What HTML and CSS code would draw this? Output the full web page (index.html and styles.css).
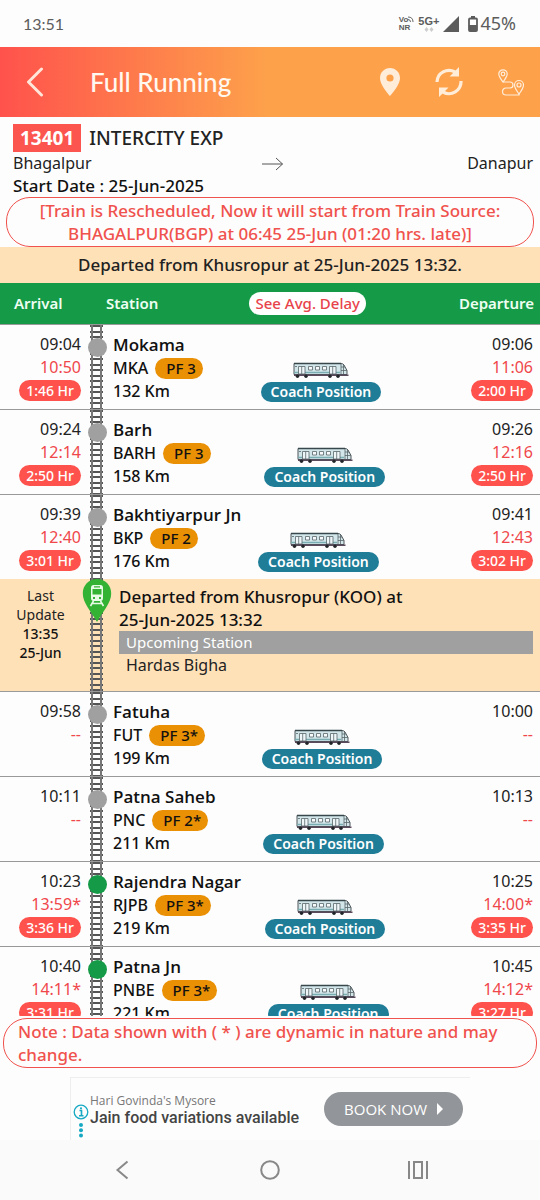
FILE: index.html
```html
<!DOCTYPE html>
<html lang="en">
<head>
  <meta charset="UTF-8" />
  <meta name="viewport" content="width=device-width, initial-scale=1.0"/>
  <title>Full Running - 13401 INTERCITY EXP</title>
  <link rel="stylesheet" href="styles.css">
</head>
<body>
  <svg class="sprite" aria-hidden="true">
    <symbol id="train" viewBox="0 0 56 16">
      <path d="M1 1.5H48Q50 1.5 51 3L54 8.5V12.5H1Z" fill="#d3e6ea" stroke="#4c5558"/>
      <path d="M1 1.5H48" stroke="#37474c" stroke-width="1.4"/>
      <path d="M1 10.5H47" stroke="#79aeb2" stroke-width="1.6"/>
      <path d="M5.5 4.5H12V12H5.5ZM8.7 4.5V12M36.5 4.5H43V12H36.5ZM39.7 4.5V12" fill="#eef6f8" stroke="#59666a" stroke-width=".8"/>
      <path d="M15.5 4.5H19.5V8H15.5ZM22.5 4.5H26.5V8H22.5ZM29.5 4.5H33.5V8H29.5Z" fill="#f7fbfc" stroke="#59666a" stroke-width=".8"/>
      <path d="M2 4.5H4M48 2V12M48 5H52M48 8.5H54M50.5 3V12" fill="none" stroke="#59666a" stroke-width=".8"/>
      <path d="M1 13.3H55.5" stroke="#5a4a5c" stroke-width="1.4"/>
      <g fill="#22262a"><circle cx="4.5" cy="14.2" r="1.7"/><circle cx="13" cy="14.2" r="1.7"/><circle cx="37" cy="14.2" r="1.7"/><circle cx="45" cy="14.2" r="1.7"/></g>
    </symbol>
  </svg>

  <div class="status-bar">
    <span class="clock">13:51</span>
    <div class="status-icons">
      <div class="volte"><span>Vo<svg width="6" height="6" viewBox="0 0 6 6"><path d="M0 1Q5 1 5 6M0 3.5Q2.5 3.5 2.5 6" fill="none" stroke="#666"/></svg></span><span>NR</span></div>
      <div class="network"><span>5G+</span><svg width="10" height="5" viewBox="0 0 10 5"><path d="M2.5 0L4.5 2.5L2.5 5L.5 2.5ZM7.5 0L9.5 2.5L7.5 5L5.5 2.5Z" fill="#ccc"/></svg></div>
      <svg width="16" height="16" viewBox="0 0 16 16"><path d="M16 0V16H0Z" fill="#5c5c5c"/></svg>
      <svg class="battery" width="10" height="16" viewBox="0 0 10 16"><path d="M3 0H7V2H3Z" fill="#5c5c5c"/><rect x="1" y="2.5" width="8" height="12.5" rx="1" fill="none" stroke="#5c5c5c" stroke-width="1.8"/><path d="M1 9H9V15H1Z" fill="#5c5c5c"/></svg>
      <span class="percent">45%</span>
    </div>
  </div>

  <header class="app-bar">
    <button class="icon-btn" aria-label="Back">
      <svg width="18" height="30" viewBox="0 0 18 30"><path d="M15.5 2L2.5 15L15.5 28" fill="none" stroke="#ffe6d9" stroke-width="3" stroke-linecap="round" stroke-linejoin="round"/></svg>
    </button>
    <h1>Full Running</h1>
    <button class="icon-btn" aria-label="Location">
      <svg width="20" height="28" viewBox="0 0 20 28"><path fill-rule="evenodd" d="M10 0C4.4 0 0 4.4 0 10C0 17.5 10 28 10 28S20 17.5 20 10C20 4.4 15.6 0 10 0ZM10 6.4A3.6 3.6 0 1 1 10 13.6A3.6 3.6 0 1 1 10 6.4Z" fill="#ffecd9"/></svg>
    </button>
    <button class="icon-btn" aria-label="Refresh">
      <svg width="28" height="30" viewBox="0 0 28 30"><path d="M2 15A12 12 0 0 1 20 5M26 14A12 12 0 0 1 8 25" fill="none" stroke="#ffecd9" stroke-width="3.2"/><path d="M24 0V9.5H14.5ZM4 30V20.5H13.5Z" fill="#ffecd9"/></svg>
    </button>
    <button class="icon-btn" aria-label="Route map">
      <svg width="26" height="27" viewBox="0 0 26 27" fill="none" stroke="#ffecd9" stroke-width="1.2"><path d="M5 13C2.5 9.5.8 7.5.8 5A4.2 4.2 0 0 1 9.2 5C9.2 7.5 7.5 9.5 5 13Z"/><circle cx="5" cy="5" r="1.8"/><path d="M21 25C18 21 16.5 19 16.5 16A4.5 4.5 0 0 1 25.5 16C25.5 19 24 21 21 25Z"/><circle cx="21" cy="16" r="2"/><path d="M5 13H12A3 3 0 0 1 12 19H8A3.5 3.5 0 0 0 8 26H21V24"/></svg>
    </button>
  </header>

  <section class="train-info">
    <h2><span class="train-no">13401</span>INTERCITY EXP</h2>
    <div class="route">
      <span>Bhagalpur</span>
      <svg width="22" height="14" viewBox="0 0 22 14"><path d="M0 7H20.5M14 1L20.5 7L14 13" fill="none" stroke="#555"/></svg>
      <span class="to">Danapur</span>
    </div>
    <p class="start-date">Start Date : 25-Jun-2025</p>
  </section>

  <p class="notice">[Train is Rescheduled, Now it will start from Train Source: BHAGALPUR(BGP) at 06:45 25-Jun (01:20 hrs. late)]</p>
  <p class="departed">Departed from Khusropur at 25-Jun-2025 13:32.</p>

  <main class="list">
    <table>
      <colgroup>
        <col class="col-arrival">
        <col class="col-track">
        <col>
        <col class="col-departure">
      </colgroup>
      <thead>
        <tr>
          <th class="arrival-head">Arrival</th>
          <th colspan="2"><div class="station-head">Station <button class="delay-btn">See Avg. Delay</button></div></th>
          <th class="departure-head">Departure</th>
        </tr>
      </thead>
      <tbody>
        <tr>
          <td class="time">09:04<span class="actual">10:50</span><span class="late">1:46 Hr</span></td>
          <td class="track"><span class="dot"></span></td>
          <td class="station">
            <div class="name">Mokama</div>
            <div class="details">
              <div><div class="code">MKA <span class="pf">PF 3</span></div>132 Km</div>
              <div class="coach"><svg class="train"><use href="#train"/></svg><button>Coach Position</button></div>
            </div>
          </td>
          <td class="time">09:06<span class="actual">11:06</span><span class="late">2:00 Hr</span></td>
        </tr>
        <tr>
          <td class="time">09:24<span class="actual">12:14</span><span class="late">2:50 Hr</span></td>
          <td class="track"><span class="dot"></span></td>
          <td class="station">
            <div class="name">Barh</div>
            <div class="details">
              <div><div class="code">BARH <span class="pf">PF 3</span></div>158 Km</div>
              <div class="coach"><svg class="train"><use href="#train"/></svg><button>Coach Position</button></div>
            </div>
          </td>
          <td class="time">09:26<span class="actual">12:16</span><span class="late">2:50 Hr</span></td>
        </tr>
        <tr>
          <td class="time">09:39<span class="actual">12:40</span><span class="late">3:01 Hr</span></td>
          <td class="track"><span class="dot"></span></td>
          <td class="station">
            <div class="name">Bakhtiyarpur Jn</div>
            <div class="details">
              <div><div class="code">BKP <span class="pf">PF 2</span></div>176 Km</div>
              <div class="coach"><svg class="train"><use href="#train"/></svg><button>Coach Position</button></div>
            </div>
          </td>
          <td class="time">09:41<span class="actual">12:43</span><span class="late">3:02 Hr</span></td>
        </tr>
        <tr class="update">
          <td class="last-update">Last<br>Update<br><b>13:35<br>25-Jun</b></td>
          <td class="track">
            <svg class="pin" width="30" height="44" viewBox="0 0 30 44"><path d="M15 0C6.5 0 .8 6.5.8 14.5C.8 24 9 32 15 43C21 32 29.2 24 29.2 14.5C29.2 6.5 23.5 0 15 0Z" fill="#34b233"/><path fill-rule="evenodd" d="M11.5 6H18.5Q21 6 21 9V19Q21 22 18.5 22H11.5Q9 22 9 19V9Q9 6 11.5 6ZM10.5 10V15.5H19.5V10ZM12 7.3V8.5H18V7.3ZM11 18V20H13V18ZM17 18V20H19V18Z" fill="#e9fbe7"/><path d="M11.5 22L8.5 27M18.5 22L21.5 27M10.5 24.5H19.5" stroke="#e9fbe7" stroke-width="1.6"/></svg>
          </td>
          <td class="current" colspan="2">
            <b>Departed from Khusropur (KOO) at<br>25-Jun-2025 13:32</b>
            <div class="upcoming">Upcoming Station</div>
            <div class="next">Hardas Bigha</div>
          </td>
        </tr>
        <tr>
          <td class="time">09:58<span class="actual">--</span></td>
          <td class="track"><span class="dot"></span></td>
          <td class="station">
            <div class="name">Fatuha</div>
            <div class="details">
              <div><div class="code">FUT <span class="pf">PF 3*</span></div>199 Km</div>
              <div class="coach"><svg class="train"><use href="#train"/></svg><button>Coach Position</button></div>
            </div>
          </td>
          <td class="time">10:00<span class="actual">--</span></td>
        </tr>
        <tr>
          <td class="time">10:11<span class="actual">--</span></td>
          <td class="track"><span class="dot"></span></td>
          <td class="station">
            <div class="name">Patna Saheb</div>
            <div class="details">
              <div><div class="code">PNC <span class="pf">PF 2*</span></div>211 Km</div>
              <div class="coach"><svg class="train"><use href="#train"/></svg><button>Coach Position</button></div>
            </div>
          </td>
          <td class="time">10:13<span class="actual">--</span></td>
        </tr>
        <tr>
          <td class="time">10:23<span class="actual">13:59*</span><span class="late">3:36 Hr</span></td>
          <td class="track"><span class="dot green"></span></td>
          <td class="station">
            <div class="name">Rajendra Nagar</div>
            <div class="details">
              <div><div class="code">RJPB <span class="pf">PF 3*</span></div>219 Km</div>
              <div class="coach"><svg class="train"><use href="#train"/></svg><button>Coach Position</button></div>
            </div>
          </td>
          <td class="time">10:25<span class="actual">14:00*</span><span class="late">3:35 Hr</span></td>
        </tr>
        <tr>
          <td class="time">10:40<span class="actual">14:11*</span><span class="late">3:31 Hr</span></td>
          <td class="track"><span class="dot green"></span></td>
          <td class="station">
            <div class="name">Patna Jn</div>
            <div class="details">
              <div><div class="code">PNBE <span class="pf">PF 3*</span></div>221 Km</div>
              <div class="coach"><svg class="train"><use href="#train"/></svg><button>Coach Position</button></div>
            </div>
          </td>
          <td class="time">10:45<span class="actual">14:12*</span><span class="late">3:27 Hr</span></td>
        </tr>
      </tbody>
    </table>
  </main>

  <p class="notice note">Note : Data shown with ( * ) are dynamic in nature and may change.</p>

  <aside class="ad">
    <div class="ad-marks">
      <svg width="16" height="34" viewBox="0 0 16 34"><circle cx="8" cy="8" r="6.8" fill="none" stroke="#17a9c4" stroke-width="1.3"/><path d="M6.5 6.5H8.5V11.5M6 11.7H10.5" fill="none" stroke="#17a9c4" stroke-width="1.6"/><g fill="#17a9c4"><circle cx="8" cy="4.3" r="1.1"/><circle cx="8" cy="21" r="2"/><circle cx="8" cy="26.3" r="2"/><circle cx="8" cy="31.6" r="2"/></g></svg>
    </div>
    <div class="ad-text"><span>Hari Govinda's Mysore</span><strong>Jain food variations available</strong></div>
    <button class="book">BOOK NOW <svg width="6" height="12" viewBox="0 0 6 12"><path d="M0 0L6 6L0 12Z" fill="#fff"/></svg></button>
  </aside>

  <nav class="nav-bar">
    <button aria-label="Back"><svg width="14" height="20" viewBox="0 0 14 20"><path d="M12.5 1.5L2.5 10L12.5 18.5" fill="none" stroke="#888" stroke-width="2"/></svg></button>
    <button aria-label="Home"><svg width="20" height="20" viewBox="0 0 20 20"><circle cx="10" cy="10" r="8.8" fill="none" stroke="#888" stroke-width="2"/></svg></button>
    <button aria-label="Recent apps"><svg width="20" height="18" viewBox="0 0 20 18"><path d="M1 0V18M19 0V18M6 1H14V17H6Z" fill="none" stroke="#888" stroke-width="2"/></svg></button>
  </nav>
</body>
</html>
```
FILE: styles.css
```css
* {
  box-sizing: border-box;
}

body {
  margin: 0;
  height: 100vh;
  display: flex;
  flex-direction: column;
  font-family: "Noto Sans", "Open Sans", sans-serif;
  font-size: 16px;
  line-height: 23px;
  color: #222;
  background-color: #fdfdfd;
}

h1, h2, p {
  margin: 0;
  font-weight: 500;
}

b {
  font-weight: 500;
  color: #111;
}

button {
  border: 0;
  padding: 0;
  background: none;
  font: inherit;
  color: inherit;
  cursor: pointer;
}

svg {
  display: block;
}

.sprite {
  position: absolute;
  width: 0;
  height: 0;
}

/* phone status bar */
.status-bar {
  height: 47px;
  flex: none;
  display: flex;
  align-items: center;
  justify-content: space-between;
  padding: 0 24px 0 23px;
  color: #5c5c5c;
}

.clock {
  font-family: Lato, sans-serif;
}

.status-icons {
  display: flex;
  align-items: center;
  gap: 4px;
}

.volte, .network {
  display: flex;
  flex-direction: column;
  font-family: "Liberation Sans", sans-serif;
  font-size: 8px;
  line-height: 8px;
  font-weight: bold;
}

.volte span {
  display: flex;
}

.network {
  align-items: center;
  font-size: 11px;
  line-height: 11px;
}

.battery {
  margin-left: 5px;
}

.percent {
  margin-left: -2px;
  font-size: 18px;
}

/* header */
.app-bar {
  height: 70px;
  flex: none;
  display: flex;
  align-items: center;
  gap: 35px;
  padding: 0 16px 0 26px;
  background: linear-gradient(90deg, #ff524c, #fda24b 50%);
  color: #fff8f0;
}

.app-bar h1 {
  flex: 1;
  margin-left: 11px;
  font-family: Lato, sans-serif;
  font-size: 26px;
  line-height: 32px;
}

/* train summary */
.train-info {
  padding: 7px 7px 0 13px;
}

.train-info h2 {
  display: flex;
  gap: 8px;
  font-size: 19px;
  line-height: 28px;
}

.train-no {
  padding: 0 7px;
  background-color: #fc544e;
  color: #fff;
  font-weight: bold;
}

.route {
  display: grid;
  grid-template-columns: 1fr auto 1fr;
  align-items: center;
}

.to {
  text-align: right;
}

.start-date, .notice, .departed, .name, .current b {
  font-size: 17px;
}

.start-date {
  line-height: 22px;
  color: #111;
}

.notice {
  margin: 0 6px;
  padding: 1px 28px;
  border: 1px solid #f0524d;
  border-radius: 24px;
  text-align: center;
  color: #f0524d;
}

.departed {
  padding: 6px;
  line-height: 24px;
  text-align: center;
  background-color: #ffe1b8;
}

/* station list */
.list {
  flex: 1;
  min-height: 0;
  overflow-y: auto;
  scrollbar-width: none;
}

table {
  width: 100%;
  table-layout: fixed;
  border-collapse: separate;
  border-spacing: 0;
}

.col-arrival {
  width: 88px;
}

.col-track {
  width: 18px;
}

.col-departure {
  width: 101px;
}

th {
  height: 42px;
  padding: 0;
  background-color: #159b47;
  border-bottom: 1px solid #999;
  color: #eefff2;
  font-size: 15px;
  font-weight: 600;
  text-align: left;
}

.arrival-head {
  padding-left: 14px;
}

.departure-head {
  padding-right: 6px;
  text-align: right;
}

.station-head {
  display: flex;
  justify-content: space-between;
  padding: 0 73px 0 18px;
}

.delay-btn {
  padding: 0 6px;
  border-radius: 12px;
  background-color: #fff;
  color: #e8434b;
  font-weight: 500;
}

td {
  padding: 0;
  height: 85px;
  border-bottom: 1px solid #999;
  vertical-align: top;
}

.time {
  padding: 8px 7px 0 0;
  text-align: right;
}

.actual {
  display: block;
  color: #f0474b;
}

.late {
  display: inline-block;
  padding: 0 7px;
  border-radius: 11px;
  background-color: #ff524c;
  color: #fff;
  font-size: 14px;
  line-height: 21px;
  font-weight: 500;
}

/* two rails with the sleepers across them */
.track {
  background:
    linear-gradient(#777, #777) 3px 0 / 2px 100% no-repeat,
    linear-gradient(#777, #777) 12px 0 / 2px 100% no-repeat,
    repeating-linear-gradient(#555 0, #555 2px, transparent 2px, transparent 6px, #555 6px, #555 8px, transparent 8px, transparent 11px) 2px 0 / 13px 100% no-repeat;
}

.dot {
  display: block;
  width: 19px;
  height: 19px;
  margin-top: 13px;
  border-radius: 50%;
  background-color: #a0a0a0;
}

.dot.green {
  background-color: #159b47;
}

.station {
  padding: 8px 0 0 7px;
  color: #111;
  font-weight: 500;
}

.name {
  font-family: "Open Sans", "Noto Sans", sans-serif;
  font-weight: 600;
}

.details {
  display: flex;
}

.code {
  display: flex;
  align-items: center;
  gap: 7px;
  line-height: 24px;
}

.pf {
  padding: 0 7px 0 11px;
  border-radius: 11px;
  background-color: #ea9005;
  font-size: 15px;
  line-height: 21px;
}

.coach {
  flex: 1;
  display: flex;
  flex-direction: column;
  align-items: center;
  gap: 4px;
  padding-top: 6px;
}

.train {
  width: 56px;
  height: 16px;
}

.coach button {
  padding: 0 10px;
  border-radius: 10px;
  background-color: #1f7d98;
  color: #fff;
  font-size: 14px;
  line-height: 20px;
  font-weight: 600;
}

/* current position of the train */
.update td {
  height: 113px;
  background-color: #ffe1b8;
}

.update .track {
  background-color: #ffe1b8;
}

tr:has(+ .update) td {
  height: 84px;
  border-bottom: 0;
}

.update .last-update {
  padding: 7px 7px 0 0;
  font-size: 14px;
  line-height: 19px;
  text-align: center;
}

.update .current {
  padding: 6px 7px 0 13px;
}

.current b {
  display: block;
}

.pin {
  margin-left: -6px;
}

.upcoming {
  padding: 0 7px;
  background-color: #a0a0a0;
  color: #fff;
  font-size: 15px;
}

.next {
  padding: 0 7px;
}

.note {
  margin: 2px 3px 0;
  padding: 1px 14px;
  text-align: left;
}

/* banner */
.ad {
  width: 400px;
  height: 63px;
  flex: none;
  margin: 9px auto 0;
  display: flex;
  align-items: center;
  border: 1px solid #eee;
  border-width: 1px 0 0 1px;
  font-family: "Open Sans", sans-serif;
}

.ad-marks {
  width: 19px;
  padding: 24px 0 0 2px;
}

.ad-text {
  flex: 1;
  display: flex;
  flex-direction: column;
  font-size: 12px;
  line-height: 17px;
  color: #777;
}

.ad-text strong {
  font-family: Roboto, sans-serif;
  font-size: 16px;
  font-weight: 500;
  color: #444;
}

.book {
  display: flex;
  align-items: center;
  gap: 10px;
  margin-right: 7px;
  padding: 0 20px;
  border-radius: 17px;
  background-color: #929599;
  color: #fff;
  font-size: 15px;
  font-weight: 500;
  line-height: 34px;
}

/* phone navigation */
.nav-bar {
  height: 60px;
  flex: none;
  display: flex;
  align-items: center;
  padding: 0 48px;
  background-color: #fafafa;
}

.nav-bar button {
  flex: 1;
}

.nav-bar svg {
  margin: 0 auto;
}
```
